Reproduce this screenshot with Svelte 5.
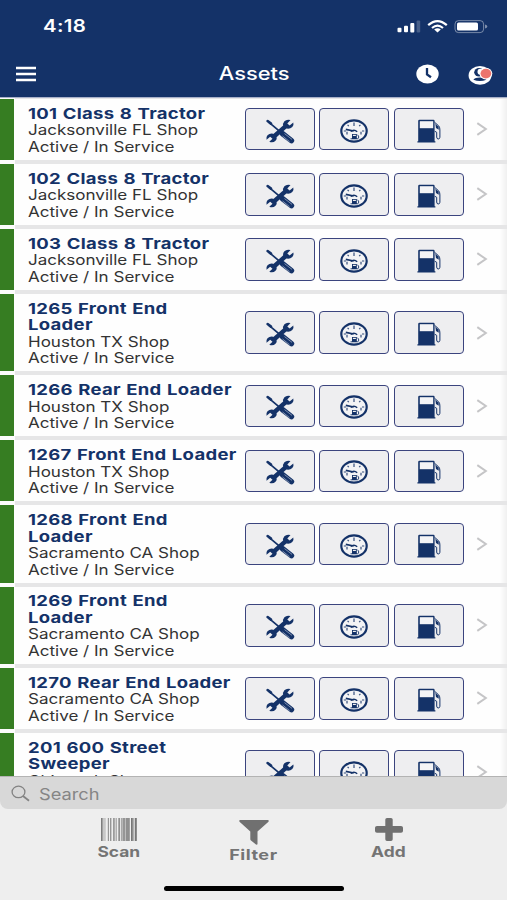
<script>
  const assets = [
    { name: ['101 Class 8 Tractor'], shop: 'Jacksonville FL Shop' },
    { name: ['102 Class 8 Tractor'], shop: 'Jacksonville FL Shop' },
    { name: ['103 Class 8 Tractor'], shop: 'Jacksonville FL Shop' },
    { name: ['1265 Front End', 'Loader'], shop: 'Houston TX Shop' },
    { name: ['1266 Rear End Loader'], shop: 'Houston TX Shop' },
    { name: ['1267 Front End Loader'], shop: 'Houston TX Shop' },
    { name: ['1268 Front End', 'Loader'], shop: 'Sacramento CA Shop' },
    { name: ['1269 Front End', 'Loader'], shop: 'Sacramento CA Shop' },
    { name: ['1270 Rear End Loader'], shop: 'Sacramento CA Shop' },
    { name: ['201 600 Street', 'Sweeper'], shop: 'Chinowth Shop' }
  ];
  // x, width and opacity of each barcode stripe
  const bars = [[0, 1.6, 0.9], [1.6, 3.2, 0.3], [6.8, 1.2, 0.7], [9, 1.4, 0.7], [12, 1.8, 0.65], [14.6, 1.2, 0.6], [17.3, 1.8, 0.75], [20, 1.8, 0.55], [22, 2.4, 0.7], [24.8, 4, 0.75], [30, 1.8, 0.95], [32.2, 1.2, 0.6], [34, 1.8, 0.95]];
</script>

<div class="phone">
  <header>
    <div class="status">
      <span class="time">4:18</span>
      <svg width="94" height="16" viewBox="0 0 94 16">
        <g fill="#fff">
          <rect x="2.5" y="9.8" width="4" height="4.5" rx="1" />
          <rect x="9" y="7.8" width="4" height="6.5" rx="1" />
          <rect x="15.3" y="5" width="4" height="9.5" rx="1" />
          <rect x="21.6" y="2.5" width="3.6" height="12" rx="1" opacity=".22" />
        </g>
        <g fill="none" stroke="#fff" stroke-width="2.2">
          <path d="M33.2 7.2 Q42.5 -1 51.8 7.2" />
          <path d="M37 10 Q42.5 5.4 48 10" />
        </g>
        <path d="M39.2 11.6 Q42.5 9 45.8 11.6 L42.5 14.6Z" fill="#fff" />
        <rect x="60" y="2.6" width="28.6" height="12" rx="3.5" fill="none" stroke="#fff" opacity=".42" />
        <rect x="62" y="4.6" width="21" height="8" rx="1.6" fill="#fff" />
        <path d="M90 6.6 Q92.3 7 92.3 8.6 Q92.3 10.2 90 10.6Z" fill="#fff" opacity=".45" />
      </svg>
    </div>
    <div class="nav">
      <svg class="menu" width="20" height="16" viewBox="0 0 20 16">
        <path d="M0 2H20M0 8H20M0 14H20" stroke="#fff" stroke-width="2.7" />
      </svg>
      <h1>Assets</h1>
      <div class="actions">
        <svg width="23" height="20" viewBox="0 0 23 20">
          <ellipse cx="11.5" cy="10" rx="11.2" ry="9.4" fill="#fff" />
          <path d="M11 4V10.4L15 13.2" fill="none" stroke="#143268" stroke-width="2.3" />
        </svg>
        <svg width="25" height="20" viewBox="0 0 25 20">
          <ellipse cx="12" cy="11.4" rx="11.4" ry="9.4" fill="#fff" />
          <ellipse cx="11" cy="8.2" rx="4.8" ry="4.3" fill="#143268" />
          <ellipse cx="12.2" cy="7.8" rx="2.7" ry="3" fill="#fff" />
          <path d="M5.4 15.8Q7 13.6 11.8 13.6Q17 13.6 18.4 15.8Q11.8 18.4 5.4 15.8Z" fill="#143268" />
          <ellipse cx="17.9" cy="9.6" rx="6.4" ry="5.8" fill="#fff" />
          <ellipse cx="17.9" cy="9.6" rx="5.4" ry="4.8" fill="#ec746d" />
        </svg>
      </div>
    </div>
  </header>

  <main>
    {#each assets as asset}
      <article class:tall={asset.name.length > 1}>
        <div class="info">
          {#each asset.name as line}
            <strong><span>{line}</span></strong>
          {/each}
          <p><span>{asset.shop}</span></p>
          <p><span>Active / In Service</span></p>
        </div>
        <div class="buttons">
          <button aria-label="Service">
            <svg width="28" height="24" viewBox="0 0 28 24">
              <g stroke="#143268" fill="none">
                <path d="M1.6 2L5 4.6" stroke-width="2.6" stroke-linecap="round" />
                <path d="M3 3.4L14 12.6" stroke-width="1.7" />
                <path d="M16.6 14.8L25.4 21.6" stroke-width="5.6" stroke-linecap="round" />
                <path d="M16.5 17L23.5 22.6M18.5 14.6L26 20.4" stroke="#ededf0" stroke-width=".5" />
                <path d="M6.8 18.5L20.6 6.3" stroke-width="4.4" />
              </g>
              <path d="M24.5 1.1Q20.8-.2 18.4 2.3Q16.3 4.5 17.5 7.2L20.7 9.5Q24 10.2 26.3 7.9Q28.1 6 27.3 3.5L23.6 6.4L21.3 4.5Z" fill="#143268" />
              <path d="M3.3 22.8Q7 24.3 9.5 21.8Q11.4 19.7 10.3 17L7.1 14.7Q3.8 14 1.5 16.3Q-.2 18.2.5 20.7L4.2 17.8L6.5 19.7Z" fill="#143268" />
            </svg>
          </button>
          <button aria-label="Meter">
            <svg width="28" height="24" viewBox="0 0 28 24">
              <ellipse cx="14" cy="12" rx="12.7" ry="10.6" fill="#f3f3f5" stroke="#143268" stroke-width="2.2" />
              <g stroke="#143268" fill="none" stroke-width="1.2">
                <path d="M14 3.6V7M7.6 5.8L8.8 7.1M20.4 5.8L19.2 7.1M3.8 12H6M22 12H24.2M7 12.8V15.4M21 12.8V15.4" opacity=".85" />
                <path d="M5.8 10.4L13.7 12" stroke-width="1.6" />
                <path d="M10.8 12.5Q14 9.8 17.2 12.7" stroke-width="1.5" />
                <path d="M10.5 19.8H18.2M17.2 15.6L18.6 17V19.4" stroke-width=".9" />
              </g>
              <rect x="12" y="15" width="4.8" height="5" fill="#143268" />
              <rect x="12.9" y="15.8" width="3" height="1.2" fill="#eee" />
            </svg>
          </button>
          <button aria-label="Fuel">
            <svg width="24" height="24" viewBox="0 0 24 24">
              <path d="M1.2 22.2V2Q1.2.8 2.5.8H16.5Q17.6.8 17.6 2V22.2H18.4V23.4H.4V22.2Z" fill="#143268" />
              <rect x="2.8" y="2.2" width="13.4" height="7" fill="#f4f4f6" />
              <path d="M17.5 3.2L21.8 7Q23 8.5 22.9 11V18.3Q22.7 20 21.2 20Q19.7 19.9 19.7 18V13.3L17.8 12.3" fill="none" stroke="#143268" stroke-width="1" />
              <path d="M18.3 4.7L21.7 7.7V10.8L19 9Z" fill="#143268" />
            </svg>
          </button>
        </div>
        <svg class="chevron" width="12" height="14" viewBox="0 0 12 14">
          <path d="M1.3 1.2L9.8 7L1.3 12.8" fill="none" stroke="#c5c5c7" stroke-width="2" />
        </svg>
      </article>
    {/each}
  </main>

  <div class="search">
    <svg width="19" height="17" viewBox="0 0 19 17">
      <ellipse cx="7.5" cy="6.9" rx="6.4" ry="5.7" fill="none" stroke="#838383" stroke-width="1.3" />
      <path d="M12 11L18 15.7" stroke="#838383" stroke-width="1.8" />
    </svg>
    <span>Search</span>
  </div>

  <footer>
    <div class="tab scan">
      <svg width="36" height="23" viewBox="0 0 36 23">
        {#each bars as [x, w, o]}
          <rect {x} y="0" width={w} height="23" fill="#707070" opacity={o} />
        {/each}
      </svg>
      <span>Scan</span>
    </div>
    <div class="tab filter">
      <svg width="30" height="25" viewBox="0 0 30 25">
        <path d="M.8 0H29.2Q30.3.8 29.2 2L18.5 11.5V24Q18.3 25 17 24.5L12 20.5Q11.3 20 11.3 19V11.5L.8 2Q-.3.8.8 0Z" fill="#707070" />
      </svg>
      <span>Filter</span>
    </div>
    <div class="tab add">
      <svg width="28" height="23" viewBox="0 0 28 23">
        <path d="M12 0H16Q17.7 0 17.7 1.5V8H26Q28 8 28 9.7V13Q28 14.7 26 14.7H17.7V21.3Q17.7 23 16 23H12Q10.3 23 10.3 21.3V14.7H2Q0 14.7 0 13V9.7Q0 8 2 8H10.3V1.5Q10.3 0 12 0Z" fill="#707070" />
      </svg>
      <span>Add</span>
    </div>
    <i class="home"></i>
  </footer>
</div>

<style>
  .phone {
    width: 507px;
    height: 900px;
    overflow: hidden;
    display: flex;
    flex-direction: column;
    background: #eee;
    font-family: Inter, 'Liberation Sans', sans-serif;
  }
  svg { display: block; flex: none; overflow: visible; }
  header { height: 97px; flex: none; background: #143268; color: #fff; border-bottom: 1px solid #a9b1ca; }
  .status { height: 52px; display: flex; justify-content: space-between; align-items: center; padding: 0 18px 0 43px; }
  .time { font-size: 17px; font-weight: 600; letter-spacing: .3px; transform: scaleX(1.2); transform-origin: left; }
  .nav { height: 43px; display: grid; grid-template-columns: 1fr auto 1fr; align-items: center; padding: 0 14px 0 16px; }
  h1 { margin: 0; font-size: 18px; font-weight: 500; transform: scaleX(1.215); line-height: 43px; }
  .actions { display: flex; justify-content: flex-end; gap: 29px; }
  main {
    height: 679px;
    flex: none;
    overflow: hidden;
    background: linear-gradient(90deg, #fcfcfc 14.5px, #e6e6e7 15px);
    border-bottom: 1px solid #b3b3b3;
    box-sizing: border-box;
  }
  article {
    height: 65.15px;
    box-sizing: border-box;
    display: flex;
    align-items: center;
    border-bottom: 4px solid transparent;
    background: linear-gradient(90deg, #367d22 14.5px, #fefefe 14.5px, #fefefe 500px, #f0f0f0 507px);
    background-clip: padding-box;
  }
  article:first-child { margin-top: .6px; }
  article.tall { height: 81.2px; }
  .info { width: 217px; padding: 2.2px 0 0 28px; flex: none; white-space: nowrap; color: #333; font-size: 14.2px; line-height: 16.5px; }
  .info strong, .info p { display: block; margin: 0; height: 16.5px; }
  .info strong { color: #143268; font-size: 15px; font-weight: 700; }
  .info span { display: inline-block; transform: scaleX(1.2); transform-origin: left; }
  .info strong span { letter-spacing: .25px; word-spacing: .6px; transform: scaleX(1.232); }
  .buttons { display: flex; gap: 4.4px; }
  button { width: 70px; height: 42.5px; box-sizing: border-box; padding: 3px 0 0; border: 1.4px solid #3b447e; border-radius: 4px; background: #eeeef0; display: flex; justify-content: center; align-items: center; }
  .chevron { margin-left: 12.5px; }
  .search { height: 32px; flex: none; box-sizing: border-box; display: flex; align-items: center; gap: 9px; padding: 1px 0 0 11px; background: #d8d8d8; border-radius: 0 0 8px 8px; color: #858585; font-size: 16px; }
  .search span { transform: scaleX(1.14); transform-origin: left; }
  footer { height: 91px; flex: none; position: relative; display: flex; justify-content: center; }
  .tab { width: 135px; display: flex; flex-direction: column; align-items: center; padding-top: 9px; color: #747474; font-size: 14.5px; font-weight: 700; }
  .tab span { line-height: 18px; margin-top: 2px; transform: scaleX(1.2); }
  .filter { padding-top: 11px; }
  .filter span { margin-top: 1px; letter-spacing: .4px; transform: scaleX(1.25); }
  .home { position: absolute; left: 164px; top: 77px; width: 180px; height: 5px; border-radius: 3px; background: #000; }
</style>
